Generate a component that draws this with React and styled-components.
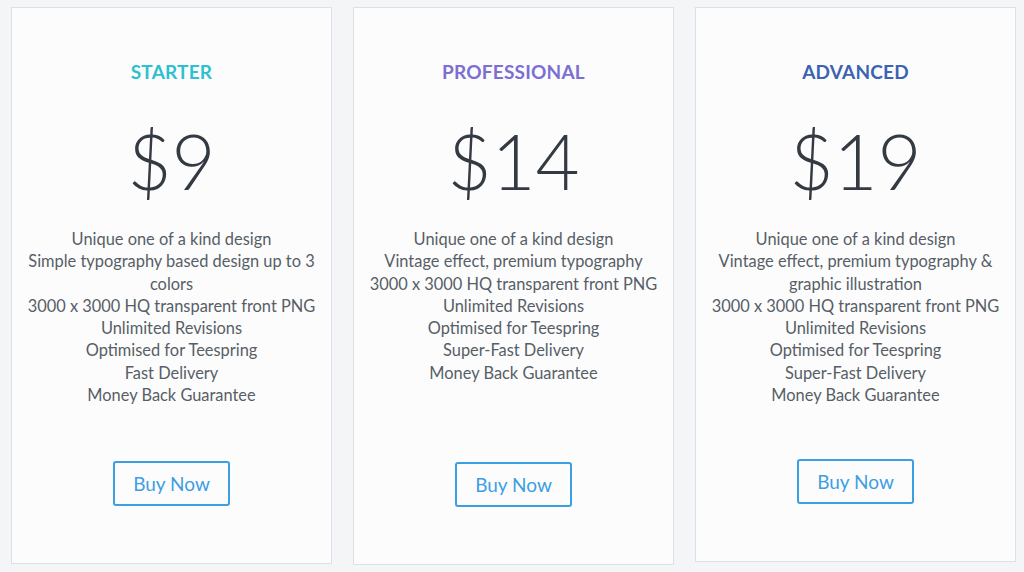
import React from "react";
import styled, { createGlobalStyle } from "styled-components";

const plans = [
  {
    name: "STARTER",
    color: "#2fc0cf",
    price: "$9",
    height: 557,
    features: [
      "Unique one of a kind design",
      "Simple typography based design up to 3 colors",
      "3000 x 3000 HQ transparent front PNG",
      "Unlimited Revisions",
      "Optimised for Teespring",
      "Fast Delivery",
      "Money Back Guarantee",
    ],
  },
  {
    name: "PROFESSIONAL",
    color: "#7b6fd1",
    price: "$14",
    height: 558,
    features: [
      "Unique one of a kind design",
      "Vintage effect, premium typography",
      "3000 x 3000 HQ transparent front PNG",
      "Unlimited Revisions",
      "Optimised for Teespring",
      "Super-Fast Delivery",
      "Money Back Guarantee",
    ],
  },
  {
    name: "ADVANCED",
    color: "#3c63b1",
    price: "$19",
    height: 555,
    features: [
      "Unique one of a kind design",
      "Vintage effect, premium typography & graphic illustration",
      "3000 x 3000 HQ transparent front PNG",
      "Unlimited Revisions",
      "Optimised for Teespring",
      "Super-Fast Delivery",
      "Money Back Guarantee",
    ],
  },
];

const GlobalStyle = createGlobalStyle`
  body {
    margin: 0;
    background: #f3f5f7;
    font-family: "Lato", "Open Sans", sans-serif;
  }
`;

const Page = styled.div`
  display: grid;
  grid-template-columns: repeat(3, 321px);
  column-gap: 21px;
  align-items: start;
  padding: 7px 10px 0 11px;
  height: 572px;
  box-sizing: border-box;
  overflow: hidden;
`;

const Card = styled.div`
  display: flex;
  flex-direction: column;
  align-items: center;
  height: ${(p) => p.$h}px;
  box-sizing: border-box;
  background: #fcfcfd;
  border: 1px solid #dde1e6;
  padding: 51px 12px 57px;
`;

const Title = styled.h2`
  margin: 0;
  font-size: 19px;
  font-weight: 700;
  line-height: 26px;
  letter-spacing: 0.2px;
  color: ${(p) => p.$color};
`;

const Price = styled.div`
  margin-top: 28px;
  font-size: 76px;
  font-weight: 300;
  line-height: 96px;
  color: #333a42;
`;

const Features = styled.ul`
  list-style: none;
  margin: 19px 0 0;
  padding: 0;
  flex: 1;
  text-align: center;
  font-size: 16.4px;
  line-height: 22.3px;
  color: #575e66;
`;

const Button = styled.button`
  width: 117px;
  height: 45px;
  border: 2px solid #3d9fe3;
  border-radius: 3px;
  background: transparent;
  color: #3d9fe3;
  font-family: inherit;
  font-size: 19px;
  cursor: pointer;
`;

export default function App() {
  return (
    <>
      <GlobalStyle />
      <Page>
        {plans.map((plan) => (
          <Card key={plan.name} $h={plan.height}>
            <Title $color={plan.color}>{plan.name}</Title>
            <Price>{plan.price}</Price>
            <Features>
              {plan.features.map((f) => (
                <li key={f}>{f}</li>
              ))}
            </Features>
            <Button>Buy Now</Button>
          </Card>
        ))}
      </Page>
    </>
  );
}
